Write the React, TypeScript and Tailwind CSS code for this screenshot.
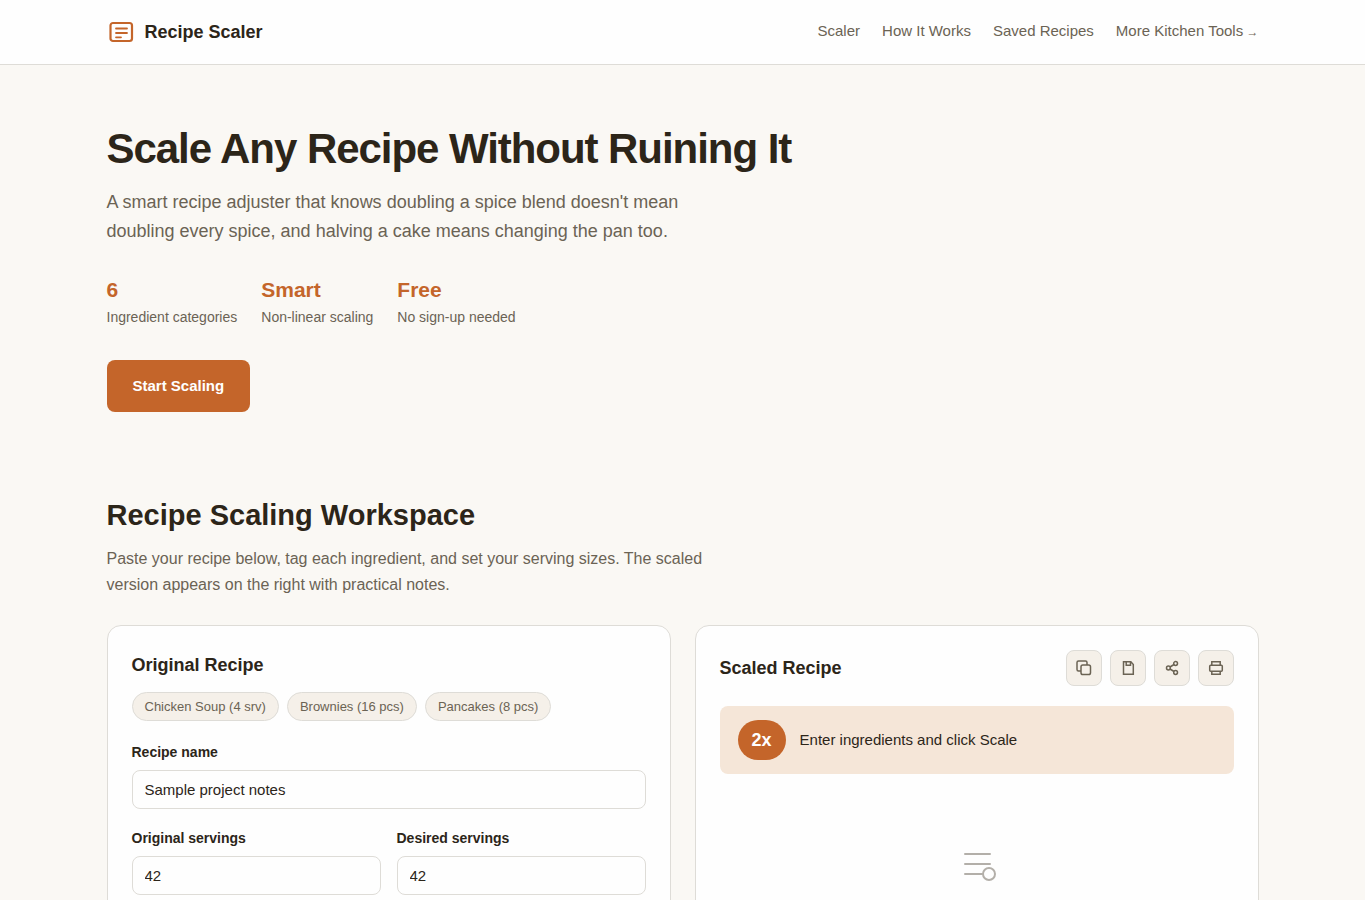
import React, { useState } from 'react';

const NAV_LINKS = [
  { label: 'Scaler', href: '#scaler' },
  { label: 'How It Works', href: '#how' },
  { label: 'Saved Recipes', href: '#saved' },
  { label: 'More Kitchen Tools', href: '#tools', arrow: true },
];

const STATS = [
  { value: '6', label: 'Ingredient categories' },
  { value: 'Smart', label: 'Non-linear scaling' },
  { value: 'Free', label: 'No sign-up needed' },
];

const PRESETS = ['Chicken Soup (4 srv)', 'Brownies (16 pcs)', 'Pancakes (8 pcs)'];

function LogoIcon() {
  return (
    <svg width="28" height="28" viewBox="0 0 28 28" fill="none" stroke="#c4652a" strokeWidth="2.2" strokeLinecap="round" aria-hidden="true">
      <rect x="3.5" y="5" width="21.5" height="18" rx="2.5" />
      <path d="M9 10.500h11M9 15h11M9 19.300h5" strokeWidth="1.8" />
    </svg>
  );
}

function CopyIcon() {
  return (
    <svg width="18" height="18" viewBox="0 0 18 18" fill="none" stroke="currentColor" strokeWidth="1.5" aria-hidden="true">
      <rect x="6" y="6" width="9.5" height="9.5" rx="1.8" />
      <path d="M6 12H3.500A1.500 1.500 0 0 1 2 10.500V3.500A1.500 1.500 0 0 1 3.500 2h7A1.500 1.500 0 0 1 12 3.500V6" />
    </svg>
  );
}

function SaveIcon() {
  return (
    <svg width="18" height="18" viewBox="0 0 18 18" fill="none" stroke="currentColor" strokeWidth="1.5" aria-hidden="true">
      <path d="M4.500 2.800h7.300l2.500 2.700V15.300H4.500z" />
      <path d="M7.200 2.800v3.400h4.300V2.800" />
    </svg>
  );
}

function ShareIcon() {
  return (
    <svg width="18" height="18" viewBox="0 0 18 18" fill="none" stroke="currentColor" strokeWidth="1.5" aria-hidden="true">
      <circle cx="12.600" cy="4.500" r="1.900" />
      <circle cx="5.400" cy="9" r="1.900" />
      <circle cx="12.600" cy="13.500" r="1.900" />
      <path d="M7 8l4-2.500M7 10l4 2.500" />
    </svg>
  );
}

function PrintIcon() {
  return (
    <svg width="18" height="18" viewBox="0 0 18 18" fill="none" stroke="currentColor" strokeWidth="1.5" aria-hidden="true">
      <path d="M4.800 6.300V2.800h8.400v3.500" />
      <rect x="2.700" y="6.300" width="12.600" height="6" rx="1" />
      <path d="M4.800 12.300v2.900h8.400v-2.900" />
    </svg>
  );
}

const ACTIONS = [
  { label: 'Copy', Icon: CopyIcon },
  { label: 'Save', Icon: SaveIcon },
  { label: 'Share', Icon: ShareIcon },
  { label: 'Print', Icon: PrintIcon },
];

interface FieldProps {
  id: string;
  label: string;
  value: string;
  onChange: (value: string) => void;
}

function Field({ id, label, value, onChange }: FieldProps) {
  return (
    <div className="flex min-w-0 flex-col gap-1.5">
      <label htmlFor={id} className="text-[14px] leading-[23px] font-bold">{label}</label>
      <input
        id={id}
        type="text"
        value={value}
        onChange={e => onChange(e.target.value)}
        className="h-[39px] w-full rounded-lg border border-[#dedcd7] bg-[#fefefe] px-3 text-[15px] outline-none focus:border-[#c4652a]"
      />
    </div>
  );
}

function Header() {
  return (
    <header className="border-b border-[#dedcd7] bg-[#fefefe]">
      <div className="mx-auto flex h-16 max-w-[1200px] items-center justify-between px-6">
        <a href="#top" className="flex items-center gap-2.5 text-[18px] font-bold">
          <LogoIcon />
          Recipe Scaler
        </a>
        <nav className="flex gap-[22px] pb-0.5 text-[15px] text-[#6b6354]">
          {NAV_LINKS.map(link => (
            <a key={link.href} href={link.href} className="hover:text-[#c4652a]">
              {link.label}
              {link.arrow && <span className="text-[12px]"> →</span>}
            </a>
          ))}
        </nav>
      </div>
    </header>
  );
}

function Hero() {
  return (
    <section className="mx-auto max-w-[1200px] px-6 pt-14 pb-20">
      <h1 className="text-[42px] leading-[55px] font-bold tracking-tight">Scale Any Recipe Without Ruining It</h1>
      <p className="mt-3 max-w-[600px] text-[18px] leading-[29px] text-[#6b6354]">
        A smart recipe adjuster that knows doubling a spice blend doesn't mean doubling every spice, and halving a cake means changing the pan too.
      </p>
      <dl className="mt-7 flex flex-wrap gap-6">
        {STATS.map(stat => (
          <div key={stat.label} className="flex flex-col-reverse">
            <dt className="text-[14px] leading-[22px] text-[#6b6354]">{stat.label}</dt>
            <dd className="text-[21px] leading-8 font-bold text-[#c4652a]">{stat.value}</dd>
          </div>
        ))}
      </dl>
      <button type="button" className="mt-8 h-[52px] rounded-lg bg-[#c4652a] px-[26px] text-[15px] font-bold text-white">
        Start Scaling
      </button>
    </section>
  );
}

function OriginalRecipe() {
  const [name, setName] = useState('Sample project notes');
  const [original, setOriginal] = useState('42');
  const [desired, setDesired] = useState('42');

  return (
    <section className="rounded-[14px] border border-[#dedcd7] bg-[#fefefe] p-6">
      <h3 className="text-[18px] leading-[30px] font-bold">Original Recipe</h3>
      <div className="mt-3 flex flex-wrap gap-2">
        {PRESETS.map(preset => (
          <button
            key={preset}
            type="button"
            onClick={() => setName(preset.replace(/ \(.*/, ''))}
            className="h-[29px] rounded-full border border-[#dedcd7] bg-[#f5f0e9] px-3 text-[13px] text-[#6b6354]"
          >
            {preset}
          </button>
        ))}
      </div>
      <div className="mt-5 flex flex-col gap-[18px]">
        <Field id="recipe-name" label="Recipe name" value={name} onChange={setName} />
        <div className="grid grid-cols-2 gap-4">
          <Field id="original-servings" label="Original servings" value={original} onChange={setOriginal} />
          <Field id="desired-servings" label="Desired servings" value={desired} onChange={setDesired} />
        </div>
      </div>
    </section>
  );
}

function ScaledRecipe() {
  return (
    <section className="rounded-[14px] border border-[#dedcd7] bg-[#fefefe] p-6">
      <div className="flex items-center justify-between">
        <h3 className="text-[18px] font-bold">Scaled Recipe</h3>
        <div className="flex gap-2">
          {ACTIONS.map(({ label, Icon }) => (
            <button
              key={label}
              type="button"
              aria-label={label}
              className="flex size-9 items-center justify-center rounded-lg border border-[#dedcd7] bg-[#f5f0e9] text-[#6b6354]"
            >
              <Icon />
            </button>
          ))}
        </div>
      </div>
      <div className="mt-5 flex items-center gap-3.5 rounded-lg bg-[#f5e6d8] px-[18px] py-3.5">
        <span className="flex h-10 items-center rounded-full bg-[#c4652a] px-3.5 text-[18px] font-bold text-white">2x</span>
        <span className="text-[15px]">Enter ingredients and click Scale</span>
      </div>
      {/* Empty state */}
      <div className="flex justify-center pt-[68px]">
        <svg width="48" height="48" viewBox="0 0 48 48" fill="none" stroke="#b3afa9" strokeWidth="2" strokeLinecap="round" aria-hidden="true">
          <path d="M12 12h25M12 22h25M12 32h17" />
          <circle cx="36" cy="32" r="6" />
        </svg>
      </div>
    </section>
  );
}

export default function App() {
  return (
    <div className="min-h-screen bg-[#faf8f4] font-['Liberation_Sans',Arial,sans-serif] text-[#2c2519]">
      <Header />
      <main>
        <Hero />
        <section id="scaler" className="mx-auto max-w-[1200px] px-6 pb-12">
          <h2 className="text-[29px] leading-[46px] font-bold">Recipe Scaling Workspace</h2>
          <p className="mt-2 max-w-[600px] text-[16px] leading-[26px] text-[#6b6354]">
            Paste your recipe below, tag each ingredient, and set your serving sizes. The scaled version appears on the right with practical notes.
          </p>
          <div className="mt-[27px] grid grid-cols-1 gap-6 md:grid-cols-2">
            <OriginalRecipe />
            <ScaledRecipe />
          </div>
        </section>
      </main>
    </div>
  );
}
